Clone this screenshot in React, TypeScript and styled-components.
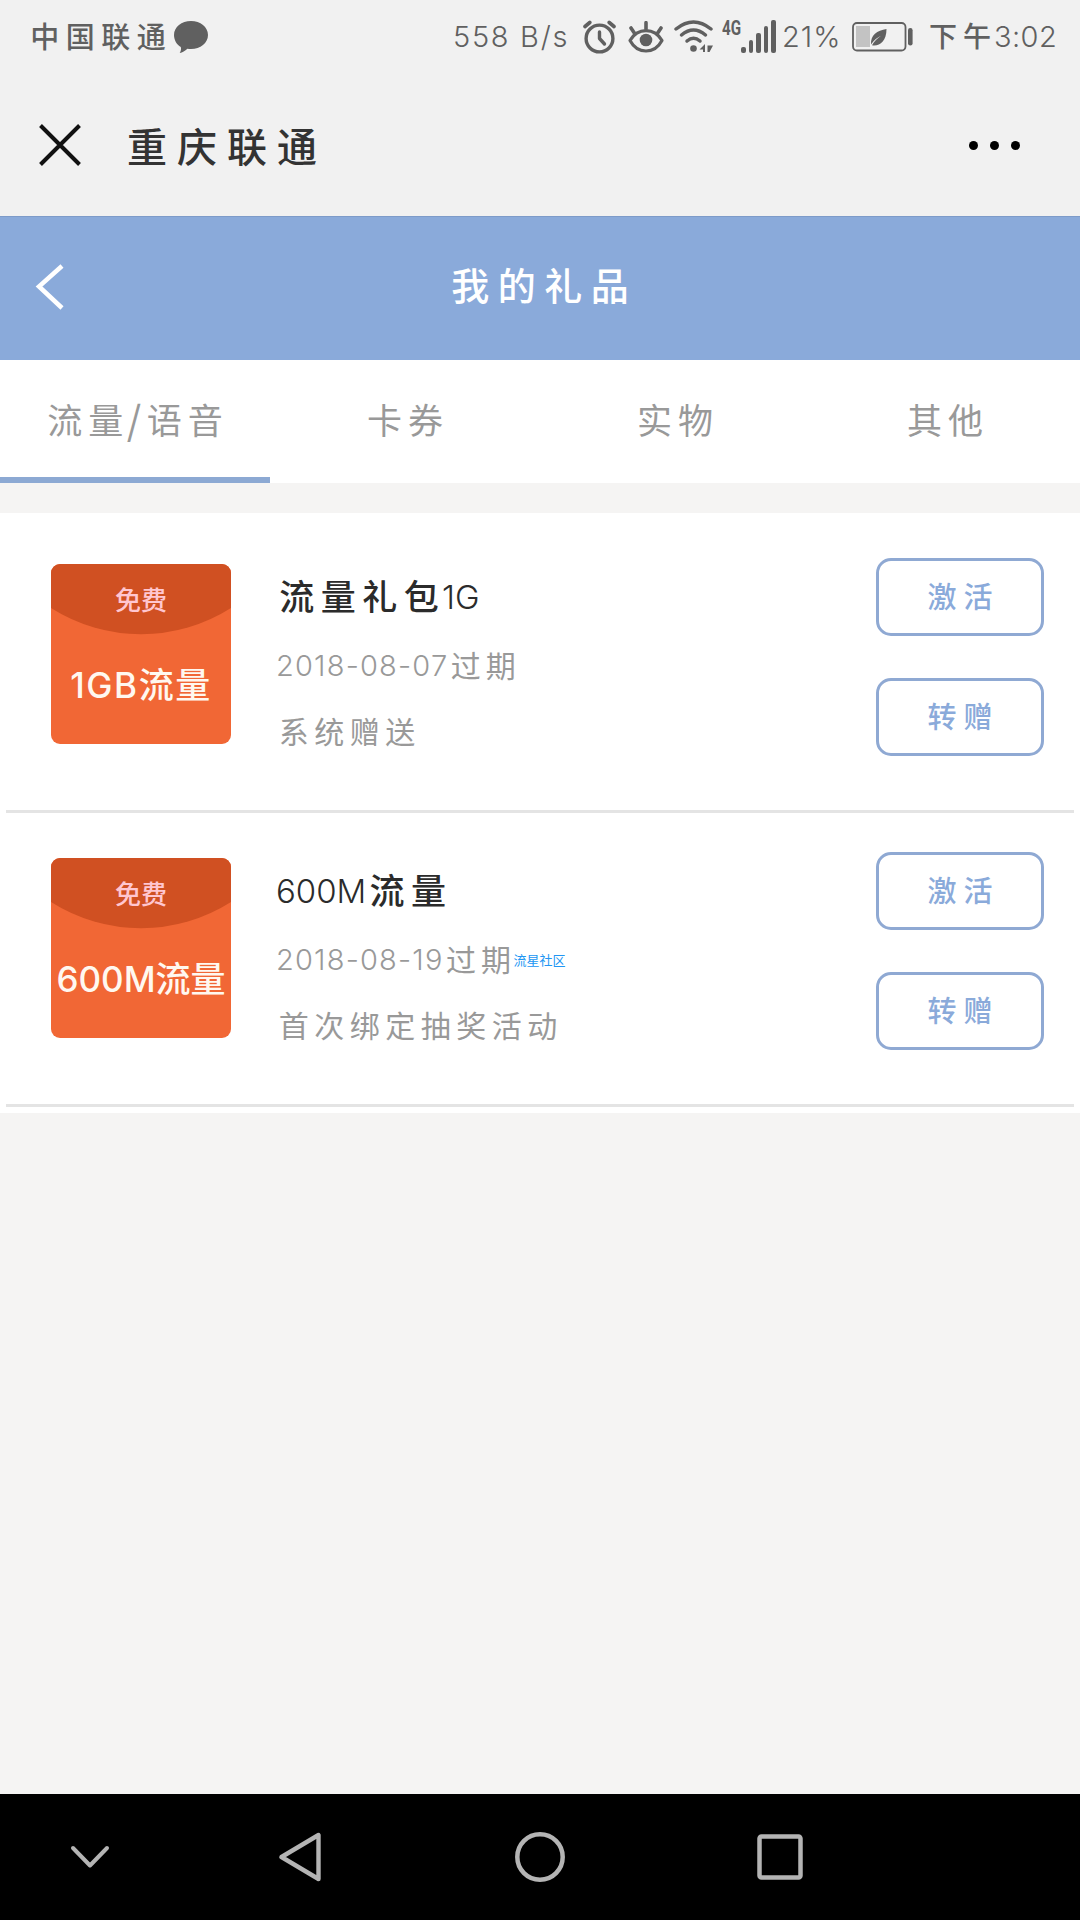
import React from 'react';
import styled, { createGlobalStyle } from 'styled-components';

const GlobalStyle = createGlobalStyle`
  * { box-sizing: border-box; }
  body { margin: 0; background: #f5f4f3; }
  ul { list-style: none; margin: 0; padding: 0; }
  h1, h2, h3, p { margin: 0; font-weight: inherit; font-size: inherit; }
  svg { display: block; }
`;

const Screen = styled.div`
  width: 1080px;
  height: 1920px;
  display: flex;
  flex-direction: column;
  background: #f5f4f3;
  font-family: Inter, 'Noto Sans CJK SC', sans-serif;
`;

/* ---------- text with separate metrics for Han and Latin runs ---------- */

const Line = styled.span<{ $color: string; $h: number }>`
  display: flex;
  align-items: center;
  height: ${p => p.$h}px;
  line-height: ${p => p.$h}px;
  color: ${p => p.$color};
  white-space: pre;
`;

const Han = styled.span<{ $size: number; $gap: number; $weight: number }>`
  font-family: 'Noto Sans CJK SC', sans-serif;
  font-size: ${p => p.$size}px;
  font-weight: ${p => p.$weight};
  letter-spacing: ${p => p.$gap}px;
  padding-left: ${p => p.$gap / 2}px;
  margin-right: ${p => -p.$gap / 2}px;
  margin-bottom: 5px;
`;

const Latin = styled.span<{ $size: number; $gap: number }>`
  font-family: Inter, sans-serif;
  font-weight: 300;
  font-size: ${p => p.$size}px;
  letter-spacing: ${p => p.$gap}px;
`;

interface MixedProps {
  text: string;
  color: string;
  h: number;
  size: number;
  gap: number;
  latin?: number;
  latinGap?: number;
  weight?: number;
}

function Mixed({ text, color, h, size, gap, latin = size, latinGap = 0, weight = 400 }: MixedProps) {
  const runs = text.match(/[\u4e00-\u9fff]+|[^\u4e00-\u9fff]+/g) || [];
  return (
    <Line $color={color} $h={h}>
      {runs.map((run, i) =>
        /[\u4e00-\u9fff]/.test(run) ? (
          <Han key={i} $size={size} $gap={gap} $weight={weight}>{run}</Han>
        ) : (
          <Latin key={i} $size={latin} $gap={latinGap}>{run}</Latin>
        )
      )}
    </Line>
  );
}

/* ---------- status bar ---------- */

const INK = '#606060';

const StatusBar = styled.div`
  height: 72px;
  flex: none;
  display: flex;
  align-items: center;
  padding: 2px 24px 0 27px;
  background: #f1f1f1;
`;

const Slot = styled.div<{ $w: number; $ml?: number }>`
  width: ${p => p.$w}px;
  margin-left: ${p => p.$ml || 0}px;
  flex: none;
`;

const Spacer = styled.div`flex: 1;`;

const Network = styled.div`
  width: 56px;
  height: 36px;
  margin-left: 8px;
  padding-bottom: 2px;
  display: flex;
  align-items: flex-end;
  flex: none;
`;

const NetworkLabel = styled.span`
  width: 19px;
  align-self: flex-start;
  font-family: Roboto, sans-serif;
  font-weight: 700;
  font-size: 20px;
  line-height: 18px;
  transform: scaleX(0.76);
  transform-origin: left;
  color: ${INK};
`;

const Bars = styled.div`
  display: flex;
  align-items: flex-end;
  gap: 3px;
  height: 34px;
`;

const Bar = styled.i<{ $h: number }>`
  width: 4.6px;
  height: ${p => p.$h}px;
  border-radius: 2px;
  background: ${INK};
`;

/* ---------- title bar ---------- */

const TitleBar = styled.header`
  height: 144px;
  flex: none;
  display: flex;
  align-items: center;
  padding: 1px 60px 0 39px;
  background: #f1f1f1;
`;

const TitleText = styled.h1`
  && { margin: 5px 0 0 41px; }
  flex: 1;
`;

const Dots = styled.div`
  display: flex;
  gap: 12px;
  padding-top: 1px;
  i { width: 9px; height: 9px; border-radius: 50%; background: #000; }
`;

/* ---------- page header and tabs ---------- */

const PageHeader = styled.div`
  height: 144px;
  flex: none;
  display: grid;
  grid-template-columns: 100px 1fr 100px;
  align-items: center;
  justify-items: center;
  padding-bottom: 4px;
  border-top: 1px solid #7d9bc9;
  background: #8aaada;
`;

const Tabs = styled.nav`
  height: 123px;
  flex: none;
  display: grid;
  grid-template-columns: repeat(4, 1fr);
  background: #fff;
`;

const Tab = styled.div<{ $active: boolean }>`
  display: flex;
  justify-content: center;
  padding-top: 36px;
  border-bottom: 6px solid ${p => (p.$active ? '#8ca9d3' : 'transparent')};
`;

/* ---------- gift list ---------- */

const GiftList = styled.ul`
  && { margin-top: 30px; padding: 6px; }
  background: #fff;
`;

const GiftRow = styled.li`
  height: 294px;
  display: flex;
  align-items: flex-start;
  padding: 0 30px 0 45px;
  border-bottom: 3px solid #e4e4e4;
`;

const Thumb = styled.div`
  width: 180px;
  height: 180px;
  margin-top: 45px;
  flex: none;
  display: grid;
  grid-template-rows: 71px 1fr;
  border-radius: 9px;
  overflow: hidden;
  background: #f16735;
`;

const Flap = styled.div`
  display: grid;
  > * { grid-area: 1 / 1; }
`;

const FlapLabel = styled.div`
  display: flex;
  justify-content: center;
  padding-top: 17px;
  font-family: 'Noto Sans CJK SC', sans-serif;
  font-weight: 500;
  font-size: 26px;
  line-height: 36px;
  color: #ffc6d0;
`;

const Amount = styled.div<{ $gap: number }>`
  display: flex;
  justify-content: center;
  align-items: center;
  height: 100px;
  font-family: Inter, 'Noto Sans CJK SC', sans-serif;
  font-weight: 500;
  font-size: 35px;
  line-height: 40px;
  letter-spacing: ${p => p.$gap}px;
  color: #fff8f0;
  white-space: nowrap;
`;

const Info = styled.div`
  flex: 1;
  margin: 53px 0 0 45px;
  display: flex;
  flex-direction: column;
`;

const DateLine = styled.div`
  display: flex;
  align-items: center;
  margin: 20px 0 18px;
`;

const Mark = styled.span`
  font-family: 'Noto Sans CJK SC', sans-serif;
  font-size: 13px;
  line-height: 18px;
  color: #2196f3;
`;

const Actions = styled.div`
  display: flex;
  flex-direction: column;
  gap: 42px;
  margin-top: 39px;
`;

const ActionButton = styled.button`
  width: 168px;
  height: 78px;
  padding: 0;
  display: flex;
  justify-content: center;
  align-items: center;
  border: 3px solid #8fa9d3;
  border-radius: 15px;
  background: #fff;
`;

/* ---------- navigation bar ---------- */

const NavBar = styled.footer`
  height: 126px;
  margin-top: auto;
  flex: none;
  display: grid;
  grid-template-columns: 180px 240px 240px 240px 180px;
  align-items: center;
  justify-items: center;
  background: #000;
`;

const gifts = [
  { amount: '1GB流量', amountGap: 1.6, title: '流量礼包1G', date: '2018-08-07过期', source: '系统赠送', mark: '' },
  { amount: '600M流量', amountGap: 0, title: '600M流量', date: '2018-08-19过期', source: '首次绑定抽奖活动', mark: '流星社区' },
];

const tabs = ['流量/语音', '卡券', '实物', '其他'];

export default function App() {
  return (
    <Screen>
      <GlobalStyle />
      <StatusBar>
        <Slot $w={147}>
          <Mixed text="中国联通" color={INK} h={40} size={29} gap={6.5} weight={500} />
        </Slot>
        <svg width="34" height="32" viewBox="0 0 34 32" fill={INK}>
          <path d="M17 0C26.400 0 34 6 34 14S26.400 28 17 28C15.800 28 14.600 27.900 13.400 27.700C11 30.200 8.500 31.200 5.700 32C7 30 7.300 28.200 6.800 26C2.600 23.400 0 19 0 14C0 6 7.600 0 17 0Z" />
        </svg>
        <Spacer />
        <Slot $w={121}>
          <Mixed text="558 B/s" color={INK} h={42} size={29} gap={0} latin={29} latinGap={1.7} />
        </Slot>
        <Slot $w={34} $ml={9}>
          <svg width="34" height="34" viewBox="0 0 34 34" fill="none" stroke={INK} strokeLinecap="round">
            <circle cx="16.500" cy="18.500" r="13.400" strokeWidth="3.400" />
            <path d="M16.500 12V18.500L21.500 24" strokeWidth="3.400" strokeLinejoin="round" />
            <path d="M2 6.500L6.800 2.500M31 6.500L26.200 2.500" strokeWidth="3.600" />
          </svg>
        </Slot>
        <Slot $w={36} $ml={11}>
          <svg width="36" height="32" viewBox="0 0 36 32" fill="none" stroke={INK} strokeLinecap="round" strokeLinejoin="round">
            <path d="M2 19.500C5.500 13.500 11 9.600 18 9.600S30.500 13.500 34 19.500C30.500 26 25 30 18 30S5.500 26 2 19.500Z" strokeWidth="3.200" />
            <circle cx="18" cy="19" r="6.300" fill={INK} stroke="none" />
            <path d="M18 1.700V8M3 7L6 11.500M33 7L30 11.500" strokeWidth="3.600" />
          </svg>
        </Slot>
        <Slot $w={40} $ml={10}>
          <svg width="40" height="34" viewBox="0 0 40 34" fill="none" stroke={INK} strokeWidth="3.500" strokeLinecap="round">
            <path d="M2 9Q19.500 -5 37 9" />
            <path d="M7.500 15Q19.500 5 31.500 15" />
            <path d="M13 21Q19.500 15.500 26 21" />
            <circle cx="19.500" cy="28.500" r="3.300" fill={INK} stroke="none" />
            <path d="M31 24V32H29V29.500H25.500ZM33.500 32V25.500H39L35.500 32Z" fill={INK} stroke="none" />
          </svg>
        </Slot>
        <Network>
          <NetworkLabel>4G</NetworkLabel>
          <Bars>
            {[6, 13, 20, 27, 33].map(h => <Bar key={h} $h={h} />)}
          </Bars>
        </Network>
        <Slot $w={62} $ml={4}>
          <Mixed text="21%" color={INK} h={42} size={29} gap={0} latin={29} latinGap={1} />
        </Slot>
        <Slot $w={62} $ml={8}>
          <svg width="62" height="30" viewBox="0 0 62 30" fill="none">
            <rect x="1" y="1" width="52.500" height="27.500" rx="4" stroke={INK} strokeWidth="1.800" />
            <rect x="4" y="4" width="14" height="21" fill="#c3c3c3" />
            <path d="M34.500 7C25 8.500 18.500 13 19 22.500C22 18 25.500 15.500 29 13.800C25.500 16.500 22 19.500 20 23.200C27 24.500 34.500 20 34.500 7Z" fill={INK} />
            <rect x="56" y="6" width="4.600" height="17.500" rx="2.200" fill={INK} />
          </svg>
        </Slot>
        <Slot $w={130} $ml={12}>
          <Mixed text="下午3:02" color={INK} h={42} size={28} gap={6} weight={500} latin={29} latinGap={0.4} />
        </Slot>
      </StatusBar>

      <TitleBar>
        <svg width="42" height="42" viewBox="0 0 42 42" stroke="#111" strokeWidth="4">
          <path d="M1.500 1.500L40.500 40.500M40.500 1.500L1.500 40.500" />
        </svg>
        <TitleText>
          <Mixed text="重庆联通" color="#333" h={60} size={40} gap={10} weight={500} />
        </TitleText>
        <Dots><i /><i /><i /></Dots>
      </TitleBar>

      <PageHeader>
        <svg width="32" height="46" viewBox="0 0 32 46" fill="none" stroke="#fff" strokeWidth="4.500">
          <path d="M28 2L5 22.500L28 44" />
        </svg>
        <Mixed text="我的礼品" color="#fff" h={56} size={38} gap={8.5} weight={500} />
      </PageHeader>

      <Tabs>
        {tabs.map((t, i) => (
          <Tab key={t} $active={i === 0}>
            <Mixed text={t} color="#999" h={50} size={35} gap={6} latin={44} latinGap={2} />
          </Tab>
        ))}
      </Tabs>

      <GiftList>
        {gifts.map(g => (
          <GiftRow key={g.amount}>
            <Thumb>
              <Flap>
                <svg width="180" height="71" viewBox="0 0 180 71">
                  <path d="M0 0H180V44A168 168 0 0 1 0 44Z" fill="#d05022" />
                </svg>
                <FlapLabel>免费</FlapLabel>
              </Flap>
              <Amount $gap={g.amountGap}>{g.amount}</Amount>
            </Thumb>
            <Info>
              <Mixed text={g.title} color="#2b2b2b" h={50} size={35} gap={6.5} latin={33} weight={500} />
              <DateLine>
                <Mixed text={g.date} color="#999" h={48} size={30} gap={5} latin={29} latinGap={1.2} />
                {g.mark && <Mark>{g.mark}</Mark>}
              </DateLine>
              <Mixed text={g.source} color="#999" h={48} size={30} gap={5.5} />
            </Info>
            <Actions>
              <ActionButton><Mixed text="激活" color="#8aaada" h={44} size={29} gap={7} weight={500} /></ActionButton>
              <ActionButton><Mixed text="转赠" color="#8aaada" h={44} size={29} gap={7} weight={500} /></ActionButton>
            </Actions>
          </GiftRow>
        ))}
      </GiftList>

      <NavBar>
        <svg width="40" height="24" viewBox="0 0 40 24" fill="none" stroke="#b4b4b4" strokeWidth="4" strokeLinecap="round" strokeLinejoin="round">
          <path d="M3 3L20 20.500L37 3" />
        </svg>
        <svg width="44" height="50" viewBox="0 0 44 50" fill="none" stroke="#b4b4b4" strokeWidth="4.400" strokeLinejoin="round">
          <path d="M40.500 3V47L3.500 25Z" />
        </svg>
        <svg width="50" height="50" viewBox="0 0 50 50" fill="none" stroke="#b4b4b4" strokeWidth="4.500">
          <circle cx="25" cy="25" r="22.700" />
        </svg>
        <svg width="46" height="46" viewBox="0 0 46 46" fill="none" stroke="#b4b4b4" strokeWidth="4.500">
          <rect x="2.500" y="2.500" width="41" height="41" rx="2" />
        </svg>
      </NavBar>
    </Screen>
  );
}
